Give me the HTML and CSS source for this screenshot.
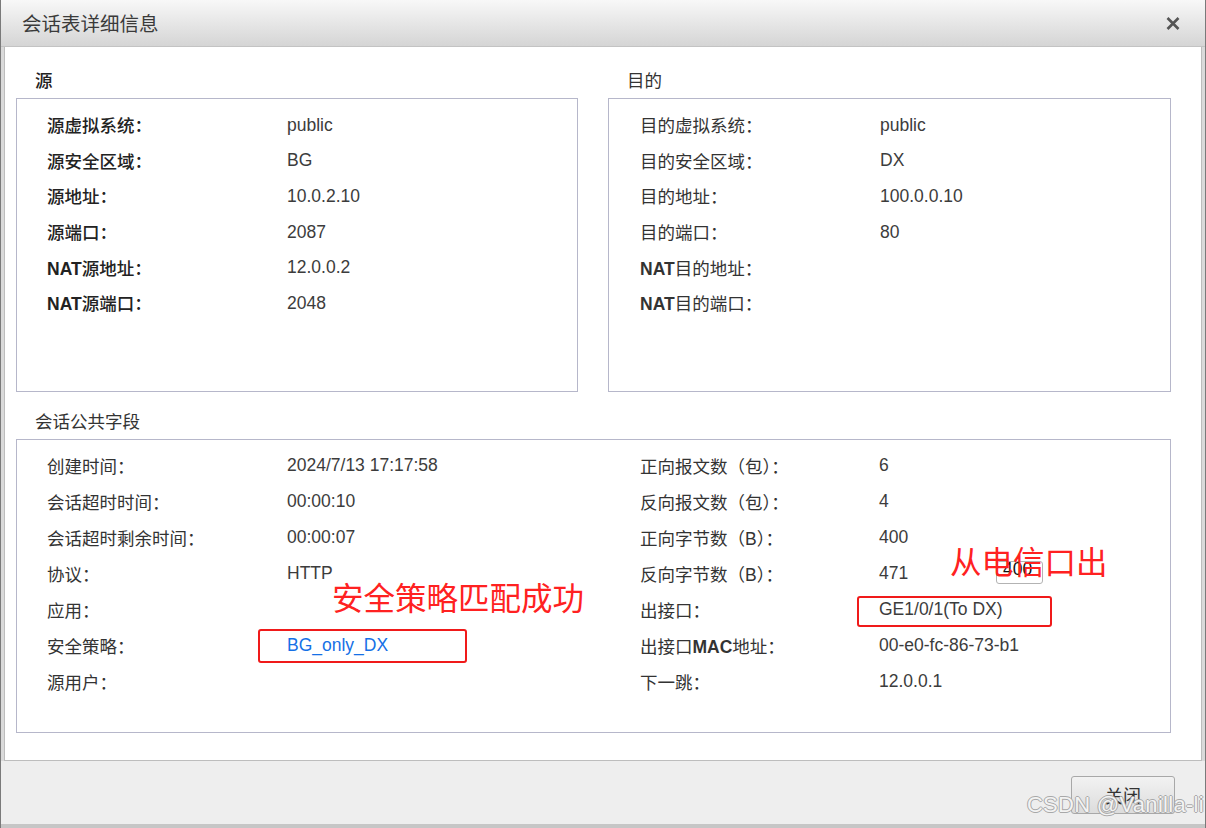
FILE: index.html
```html
<!DOCTYPE html>
<html lang="zh-CN">
<head>
<meta charset="utf-8">
<title>会话表详细信息</title>
<link rel="stylesheet" href="styles.css">
</head>
<body>
<div class="dialog">
  <div class="titlebar">
    <span class="title">会话表详细信息</span>
    <span class="close" aria-label="关闭">
      <svg width="14" height="13" viewBox="0 0 14 13"><path d="M1.5 1 L12.5 12 M12.5 1 L1.5 12" stroke="#555" stroke-width="2.6" stroke-linecap="butt" fill="none"/></svg>
    </span>
  </div>
  <div class="content">
    <div class="top-grid">
      <section class="group">
        <h3 class="group-title strong">源</h3>
        <div class="box box-src">
          <div class="row"><span class="label">源虚拟系统：</span><span class="value">public</span></div>
          <div class="row"><span class="label">源安全区域：</span><span class="value">BG</span></div>
          <div class="row"><span class="label">源地址：</span><span class="value">10.0.2.10</span></div>
          <div class="row"><span class="label">源端口：</span><span class="value">2087</span></div>
          <div class="row"><span class="label"><b class="nat">NAT</b>源地址：</span><span class="value">12.0.0.2</span></div>
          <div class="row"><span class="label"><b class="nat">NAT</b>源端口：</span><span class="value">2048</span></div>
        </div>
      </section>
      <section class="group">
        <h3 class="group-title">目的</h3>
        <div class="box box-dst">
          <div class="row"><span class="label">目的虚拟系统：</span><span class="value">public</span></div>
          <div class="row"><span class="label">目的安全区域：</span><span class="value">DX</span></div>
          <div class="row"><span class="label">目的地址：</span><span class="value">100.0.0.10</span></div>
          <div class="row"><span class="label">目的端口：</span><span class="value">80</span></div>
          <div class="row"><span class="label"><b class="nat">NAT</b>目的地址：</span><span class="value"></span></div>
          <div class="row"><span class="label"><b class="nat">NAT</b>目的端口：</span><span class="value"></span></div>
        </div>
      </section>
    </div>
    <section class="group">
      <h3 class="group-title common-title">会话公共字段</h3>
      <div class="box common-box">
        <div class="col col-left">
          <div class="row"><span class="label">创建时间：</span><span class="value">2024/7/13 17:17:58</span></div>
          <div class="row"><span class="label">会话超时时间：</span><span class="value">00:00:10</span></div>
          <div class="row"><span class="label">会话超时剩余时间：</span><span class="value">00:00:07</span></div>
          <div class="row"><span class="label">协议：</span><span class="value">HTTP</span></div>
          <div class="row"><span class="label">应用：</span><span class="value"></span></div>
          <div class="row"><span class="label">安全策略：</span><span class="value link">BG_only_DX</span></div>
          <div class="row"><span class="label">源用户：</span><span class="value"></span></div>
        </div>
        <div class="col col-right">
          <div class="row"><span class="label">正向报文数（包）：</span><span class="value">6</span></div>
          <div class="row"><span class="label">反向报文数（包）：</span><span class="value">4</span></div>
          <div class="row"><span class="label">正向字节数（B）：</span><span class="value">400</span></div>
          <div class="row"><span class="label">反向字节数（B）：</span><span class="value">471</span></div>
          <div class="row"><span class="label">出接口：</span><span class="value">GE1/0/1(To DX)</span></div>
          <div class="row"><span class="label">出接口<b class="nat">MAC</b>地址：</span><span class="value">00-e0-fc-86-73-b1</span></div>
          <div class="row"><span class="label">下一跳：</span><span class="value">12.0.0.1</span></div>
        </div>
      </div>
    </section>
  </div>
  <div class="footer">
    <button class="btn" type="button">关闭</button>
  </div>

  <div class="mini-input"></div>
  <div class="mini-text">400</div>
  <div class="annot annot-policy">安全策略匹配成功</div>
  <div class="annot annot-out">从电信口出</div>
  <div class="redbox redbox-policy"></div>
  <div class="redbox redbox-out"></div>
  <div class="watermark">CSDN @Vanilla-li</div>
</div>
</body>
</html>
```
FILE: styles.css
```css
html, body {
  margin: 0;
  padding: 0;
}
body {
  width: 1206px;
  height: 828px;
  overflow: hidden;
  background: #fff;
  font-family: "Liberation Sans", "Noto Sans CJK SC", sans-serif;
  color: #333;
}
.dialog {
  position: relative;
  width: 1206px;
  height: 828px;
  box-sizing: border-box;
  border-left: 1px solid #7a7a7a;
  border-right: 1px solid #7a7a7a;
  background: #dadada;
  display: flex;
  flex-direction: column;
}
.titlebar {
  height: 46px;
  flex: none;
  border-bottom: 1px solid #c3c3c3;
  background: linear-gradient(#f8f8f8, #d5d5d5);
  display: flex;
  align-items: center;
  justify-content: space-between;
  padding: 0 25px 0 21px;
}
.title {
  font-family: "Noto Sans CJK SC", sans-serif;
  font-size: 19.5px;
  line-height: 46px;
  color: #3a3a3a;
}
.close {
  display: flex;
  width: 14px;
  height: 13px;
  margin-top: 1px;
}
.content {
  flex: none;
  height: 713px;
  margin: 0 3px;
  border: 1px solid #bdbdbd;
  border-top: none;
  background: #fff;
  padding: 0 30px 0 11px;
}
.top-grid {
  display: grid;
  grid-template-columns: 562px 563px;
  column-gap: 30px;
}
.group-title {
  margin: 0;
  padding: 22px 0 0 19px;
  height: 22px;
  line-height: 22px;
  margin-bottom: 7px;
  font-size: 17.5px;
  font-weight: normal;
  font-family: "Noto Sans CJK SC", sans-serif;
  color: #333;
}
.group-title.strong {
  font-weight: 500;
  color: #222;
}
.common-title {
  padding-top: 18px;
}
.box {
  box-sizing: border-box;
  height: 294px;
  border: 1px solid #b6b7ca;
}
.box-src, .box-dst {
  padding-top: 8px;
}
.row {
  display: flex;
  align-items: center;
  height: 35.6px;
  font-size: 17.5px;
  white-space: nowrap;
}
.box-src .row { padding-left: 30px; }
.box-dst .row { padding-left: 31px; }
.label {
  width: 240px;
  flex: none;
  color: #333;
}
.box-src .label {
  font-weight: 500;
  color: #222;
}
.nat {
  font-weight: bold;
}
.value {
  color: #3c3c3c;
  padding-top: 1px;
}
.value.link {
  color: #1570e6;
}
.common-box {
  display: grid;
  grid-template-columns: 591px 1fr;
  padding-top: 7px;
}
.common-box .row {
  height: 36px;
}
.col-left .row { padding-left: 30px; }
.col-right .row { padding-left: 32px; }
.col-right .label { width: 239px; }
.footer {
  flex: 1;
  background: #eeeeee;
  border-bottom: 4px solid #c6c6c6;
  display: flex;
  justify-content: flex-end;
  align-items: flex-start;
  padding: 15px 30px 0 0;
}
.btn {
  width: 104px;
  height: 38px;
  border: 1px solid #a8a8a8;
  border-radius: 3px;
  background: linear-gradient(#f2f2f2, #dcdcdc);
  font-family: "Noto Sans CJK SC", sans-serif;
  font-size: 18px;
  color: #333;
  padding: 0;
}
.mini-input {
  position: absolute;
  left: 995px;
  top: 561px;
  width: 47px;
  height: 23px;
  box-sizing: border-box;
  border: 1px solid #b3b3b3;
  border-radius: 3px;
}
.mini-text {
  position: absolute;
  left: 1002px;
  top: 559px;
  font-size: 17.5px;
  color: #111;
}
.annot {
  position: absolute;
  font-family: "Noto Sans CJK SC", sans-serif;
  font-size: 31.5px;
  line-height: 40px;
  color: #ff2121;
  white-space: nowrap;
}
.annot-policy {
  left: 331px;
  top: 576px;
}
.annot-out {
  left: 949px;
  top: 540px;
}
.redbox {
  position: absolute;
  box-sizing: border-box;
  border: 2px solid #f01a1a;
  border-radius: 3px;
}
.redbox-policy {
  left: 257px;
  top: 629px;
  width: 209px;
  height: 34px;
}
.redbox-out {
  left: 856px;
  top: 596px;
  width: 195px;
  height: 31px;
}
.watermark {
  position: absolute;
  right: 1px;
  top: 792px;
  font-family: "Liberation Sans", sans-serif;
  font-size: 22px;
  line-height: 26px;
  color: #f3f3f3;
  letter-spacing: 0.3px;
  text-shadow: 1px 0 #a8a8a8, -1px 0 #a8a8a8, 0 1px #a8a8a8, 0 -1px #a8a8a8;
  white-space: nowrap;
}
```
